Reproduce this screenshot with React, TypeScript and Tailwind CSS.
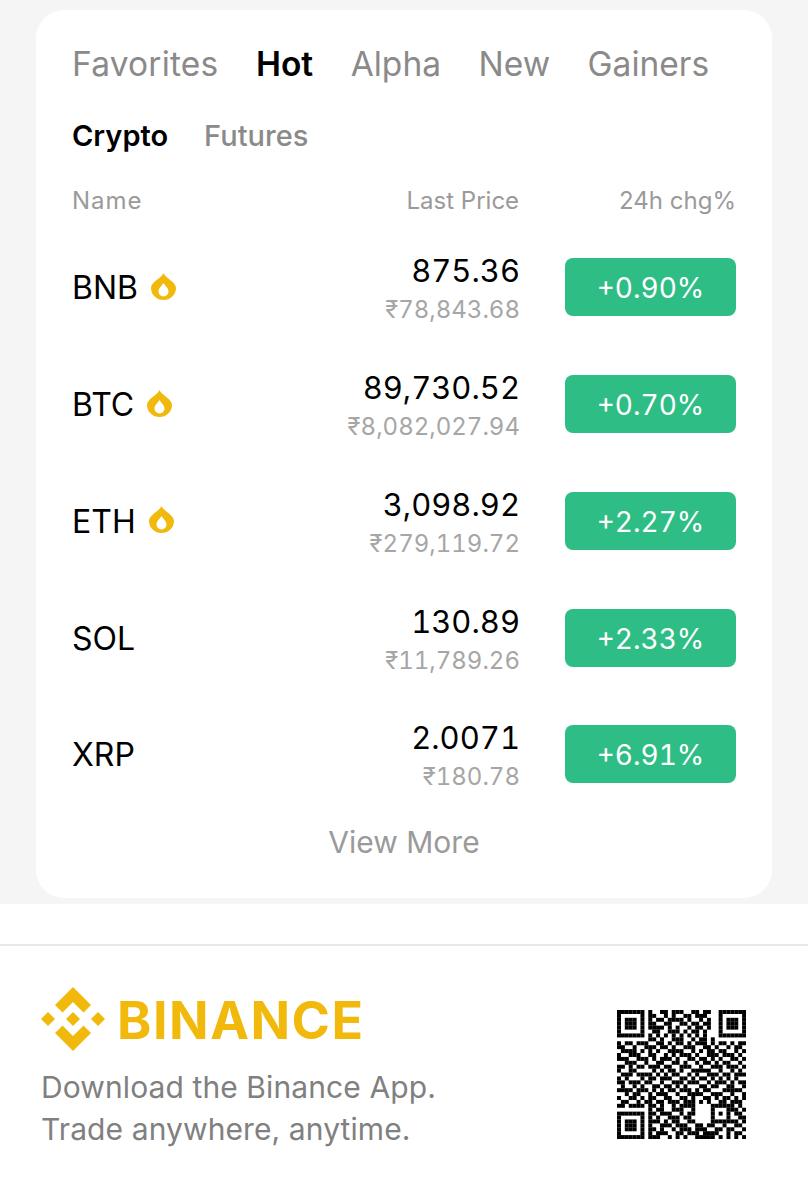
const font = "font-['Inter',sans-serif]";

const rows = [
  { sym: "BNB", hot: true, price: "875.36", fiat: "₹78,843.68", chg: "+0.90%" },
  { sym: "BTC", hot: true, price: "89,730.52", fiat: "₹8,082,027.94", chg: "+0.70%" },
  { sym: "ETH", hot: true, price: "3,098.92", fiat: "₹279,119.72", chg: "+2.27%" },
  { sym: "SOL", hot: false, price: "130.89", fiat: "₹11,789.26", chg: "+2.33%" },
  { sym: "XRP", hot: false, price: "2.0071", fiat: "₹180.78", chg: "+6.91%" },
];

// finder and alignment squares are laid over these in fixedOn
const qrRows = [
  "000000001001101110011011000000000",
  "000000001100101001101110000000000",
  "000000001011011110100101000000000",
  "000000001100110011011011000000000",
  "000000001111010100101101000000000",
  "000000000110011101011010000000000",
  "000000001010101010101010000000000",
  "000000001101001110010110100000000",
  "101101110011010110101110101101011",
  "110010011101101001110011010010110",
  "011110101010011110010101101100101",
  "100111001100101011101001110111010",
  "111001110101110100110110101001101",
  "001110010011001101001011010110010",
  "110101101110110011100100111011101",
  "100110000101011010011111001001010",
  "011101111010101100101001110110111",
  "101000101101110011010110101010100",
  "110111011001001110111001011101011",
  "010010100110110101000110110011001",
  "111101110101011011101011000111110",
  "001011001011100100111100111001001",
  "100110101100110011010011010110101",
  "011001011011011101110101001101110",
  "110111101101001011110000001011010",
  "000000001011001110010000001101101",
  "000000001101110010110000001100110",
  "000000001010011101100000000110011",
  "000000001110101100110000011011101",
  "000000001001110111001101100100110",
  "000000001101001011101110011011001",
  "000000001011100110111011110010110",
  "000000001110010101001111101010101",
];

function fixedOn(x: number, y: number): boolean | null {
  const finder = (fx: number, fy: number) => {
    const dx = x - fx;
    const dy = y - fy;
    if (dx < -1 || dy < -1 || dx > 7 || dy > 7) return null;
    if (dx === -1 || dy === -1 || dx === 7 || dy === 7) return false;
    if (dx === 0 || dy === 0 || dx === 6 || dy === 6) return true;
    return dx >= 2 && dx <= 4 && dy >= 2 && dy <= 4;
  };
  const f = finder(0, 0) ?? finder(26, 0) ?? finder(0, 26);
  if (f !== null) return f;
  if (x >= 24 && x <= 28 && y >= 24 && y <= 28) {
    return x === 24 || x === 28 || y === 24 || y === 28 || (x === 26 && y === 26);
  }
  return null;
}

function QrCode() {
  const cells: { x: number; y: number }[] = [];
  qrRows.forEach((row, y) => {
    row.split("").forEach((c, x) => {
      if (fixedOn(x, y) ?? c === "1") cells.push({ x, y });
    });
  });
  return (
    <svg width="129" height="129" viewBox="0 0 33 33" className="mr-[21px] mt-[23px]">
      {cells.map((c) => (
        <rect key={`${c.x}-${c.y}`} x={c.x} y={c.y} width="1.02" height="1.02" fill="#000" />
      ))}
    </svg>
  );
}

function Flame() {
  return (
    <svg width="25" height="27" viewBox="0 0 25 27" className="mb-[2px] ml-[13px]">
      <path
        fillRule="evenodd"
        fill="#f0b90b"
        d="M12.5 0 C14 4.500 25 9 25 15 A12.500 12 0 0 1 0 15 C0 9 11 4.500 12.500 0 Z M12.500 10 C11 13 7.500 15 7.500 18.500 A5 5 0 0 0 17.500 18.500 C17.500 15 14 13 12.500 10 Z"
      />
    </svg>
  );
}

function Logo() {
  return (
    <svg width="64" height="64" viewBox="0 0 64 64">
      <g fill="#f0b90b">
        <path d="M32 0 L50 18 L42.500 25.500 L32 15 L21.500 25.500 L14 18 Z" />
        <path d="M32 64 L50 46 L42.500 38.500 L32 49 L21.500 38.500 L14 46 Z" />
        <path d="M0 32 L7 25 L14 32 L7 39 Z" />
        <path d="M50 32 L57 25 L64 32 L57 39 Z" />
        <path d="M32 25 L39 32 L32 39 L25 32 Z" />
      </g>
    </svg>
  );
}

function Row({ sym, hot, price, fiat, chg }: (typeof rows)[number]) {
  return (
    <div className="flex h-[116.75px] items-center">
      <div className="flex flex-1 items-center">
        <span className="mt-[2px] text-[32px] leading-none text-black">{sym}</span>
        {hot && <Flame />}
      </div>
      <div className="mt-[6px] flex flex-col items-end tabular-nums">
        <span className="text-[31px] leading-[39px] text-black">{price}</span>
        <span className="text-[24px] leading-[39px] text-[#a6a6a6]">{fiat}</span>
      </div>
      <div className="ml-[45px] flex h-[58px] w-[171px] items-center justify-center rounded-lg bg-[#2ebd85] pt-[2px] text-[28px] tabular-nums text-white">
        {chg}
      </div>
    </div>
  );
}

export default function App() {
  return (
    <div className={`${font} h-[1200px] w-[808px] overflow-hidden bg-white`}>
      <div className="h-[904px] bg-[#f5f5f5] px-[36px] pt-[10px]">
        <div className="h-[888px] rounded-[28px] bg-white px-[36px] pt-[30px]">
          <div className="flex items-center gap-[37.5px] text-[33.5px] leading-[48px] text-[#8a8a8a]">
            <span className="tracking-[0.2px]">Favorites</span>
            <span className="font-semibold text-black">Hot</span>
            <span>Alpha</span>
            <span>New</span>
            <span>Gainers</span>
          </div>
          <div className="mt-[30px] flex gap-[36px] text-[29px] leading-[36px]">
            <span className="font-semibold text-black">Crypto</span>
            <span className="font-medium text-[#8a8a8a]">Futures</span>
          </div>
          <div className="mt-[31px] flex text-[24px] leading-[32px] text-[#9a9a9a]">
            <span className="flex-1 tracking-[1px]">Name</span>
            <span>Last Price</span>
            <span className="ml-[100px]">24h chg%</span>
          </div>
          <div className="mt-[12px]">
            {rows.map((r) => (
              <Row key={r.sym} {...r} />
            ))}
          </div>
          <div className="mt-[9px] text-center text-[30px] leading-[40px] text-[#9a9a9a]">View More</div>
        </div>
      </div>
      <div className="mt-[40px] border-t-2 border-[#e8e8e8] px-[41px] pt-[41px]">
        <div className="flex justify-between">
          <div>
            <div className="flex h-[64px] items-center">
              <Logo />
              <span className="ml-[12px] mt-[4px] text-[52px] font-bold leading-[64px] tracking-[1.5px] text-[#f0b90b]">
                BINANCE
              </span>
            </div>
            <div className="mt-[15px] text-[30px] leading-[42px] tracking-[0.1px] text-[#808080]">
              Download the Binance App.
              <br />
              Trade anywhere, anytime.
            </div>
          </div>
          <QrCode />
        </div>
      </div>
    </div>
  );
}
